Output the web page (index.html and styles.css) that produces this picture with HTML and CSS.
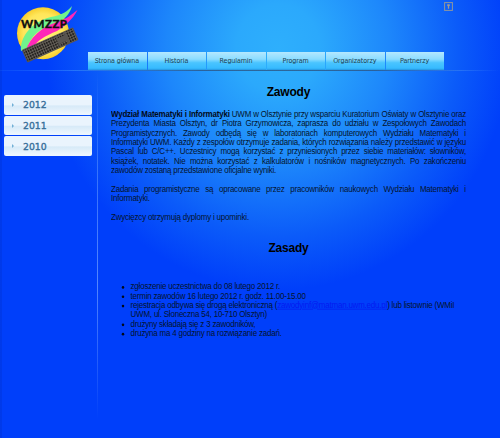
FILE: index.html
```html
<!DOCTYPE html>
<html lang="pl">
<head>
<meta charset="utf-8">
<title>WMZZP</title>
<link rel="stylesheet" href="styles.css">
</head>
<body>
<header class="header">
  <svg class="logo" viewBox="0 0 64 60" width="64" height="60">
    <defs>
      <radialGradient id="sun"><stop offset="0" stop-color="#fff47c"/><stop offset=".75" stop-color="#ffe65a"/><stop offset="1" stop-color="#f8ce2e"/></radialGradient>
      <pattern id="keys" width="2.5" height="2.7" patternUnits="userSpaceOnUse"><rect width="2.5" height="2.7" fill="#6d6860"/><rect width="1.8" height="2" fill="#24211e"/></pattern>
    </defs>
    <circle cx="28" cy="28.2" r="26" fill="url(#sun)"/>
    <path d="M6 46C5 32 16 17 36 12C47 10 53 6 57 1C55 9 49 16 38 19C24 24 16 31 12 43Z" fill="#71f38d"/>
    <path d="M11 45C15 33 26 22 42 17C52 14 57 9 62.500 5C58 14 50 21 42 26C30 31 22 35 18 43Z" fill="#ff27b8"/>
    <text class="logo-text" x="6" y="23.300" textLength="46">WMZZP</text>
    <g transform="translate(6.800 45) rotate(-24)">
      <rect width="56" height="13.800" rx="1" fill="#575450"/>
      <rect x="1" y="1" width="35" height="12" fill="url(#keys)"/>
      <rect x="38" y="1" width="7" height="3" fill="url(#keys)"/>
      <rect x="38" y="9.500" width="7" height="3" fill="url(#keys)"/>
      <rect x="47" y="1" width="8" height="12" fill="url(#keys)"/>
    </g>
  </svg>
  <svg class="up" viewBox="0 0 9 9" width="9" height="9"><rect x=".6" y=".6" width="7.8" height="7.8" fill="none" stroke="#8e969e" stroke-width="1"/><path d="M4.5 2.2V6.8M3 3.2H6" fill="none" stroke="#a79c8d" stroke-width="1.3"/></svg>
  <nav class="nav">
    <a><span>Strona główna</span></a><a><span>Historia</span></a><a><span>Regulamin</span></a><a><span>Program</span></a><a><span>Organizatorzy</span></a><a><span>Partnerzy</span></a>
  </nav>
</header>
<div class="columns">
  <aside class="side">
    <a><i></i>2012</a><a><i></i>2011</a><a><i></i>2010</a>
  </aside>
  <main class="main">
   <div class="content">
    <h2>Zawody</h2>
    <p>
      <span class="l"><b>Wydział Matematyki i Informatyki</b> UWM w Olsztynie przy wsparciu Kuratorium Oświaty w Olsztynie oraz</span>
      <span class="l">Prezydenta Miasta Olsztyn, dr Piotra Grzymowicza, zaprasza do udziału w Zespołowych Zawodach</span>
      <span class="l">Programistycznych. Zawody odbędą się w laboratoriach komputerowych Wydziału Matematyki i</span>
      <span class="l">Informatyki UWM. Każdy z zespołów otrzymuje zadania, których rozwiązania należy przedstawić w języku</span>
      <span class="l">Pascal lub C/C++. Uczestnicy mogą korzystać z przyniesionych przez siebie materiałów: słowników,</span>
      <span class="l">książek, notatek. Nie można korzystać z kalkulatorów i nośników magnetycznych. Po zakończeniu</span>
      <span class="l end">zawodów zostaną przedstawione oficjalne wyniki.</span>
    </p>
    <p>
      <span class="l">Zadania programistyczne są opracowane przez pracowników naukowych Wydziału Matematyki i</span>
      <span class="l end">Informatyki.</span>
    </p>
    <p><span class="l end">Zwycięzcy otrzymują dyplomy i upominki.</span></p>
    <h2 class="rules">Zasady</h2>
    <ul>
      <li>zgłoszenie uczestnictwa do 08 lutego 2012 r.</li>
      <li>termin zawodów 16 lutego 2012 r. godz. 11.00-15.00</li>
      <li>rejestracja odbywa się drogą elektroniczną (<a class="mail">zawodyinf@matman.uwm.edu.pl</a>) lub listownie (WMiI<br>UWM, ul. Słoneczna 54, 10-710 Olsztyn)</li>
      <li>drużyny składają się z 3 zawodników,</li>
      <li>drużyna ma 4 godziny na rozwiązanie zadań.</li>
    </ul>
   </div>
  </main>
</div>
</body>
</html>
```
FILE: styles.css
```css
* { box-sizing: border-box; }
body {
  margin: 0;
  width: 500px;
  height: 438px;
  overflow: hidden;
  font-family: "Liberation Sans", Arial, sans-serif;
  color: #04142e;
  background:
    linear-gradient(90deg, rgba(0,40,180,.22) 2px, transparent 2px),
    radial-gradient(ellipse 232px 242px at 278px 48px, #2eaffc 0%, #2ba9fc 18%, #1d87fb 48%, #0b5bf9 78%, #003ffa 100%);
}
.header {
  height: 72px;
  display: grid;
  grid-template-columns: 88px 356px 56px;
  grid-template-rows: 52px 20px;
  background: linear-gradient(90deg, rgba(70,160,250,.1), rgba(80,170,250,.4) 15%, rgba(45,85,130,.8) 40%, rgba(45,85,130,.8) 75%, rgba(80,150,240,.4) 92%, transparent) 0 70px / 100% 1px no-repeat;
}
.logo { grid-area: 1 / 1 / 3 / 2; margin: 5px 0 0 15px; }
.logo-text { font: 900 11.5px Lato, sans-serif; fill: #111; stroke: #111; stroke-width: .3px; }
.up { display: block; grid-area: 1 / 2 / 2 / 4; margin: 2px 0 0 356px; }
.nav { grid-area: 2 / 2; display: grid; grid-template-columns: repeat(6, 1fr); gap: 1px; height: 18px; }
.nav a {
  display: flex;
  align-items: center;
  justify-content: center;
  white-space: nowrap;
  color: #1c3e50;
  background: linear-gradient(#b4e8ff, #8bdcff 40%, #49c4ff 60%, #37bbff 90%, #2595e0);
}
.nav span { font: 12px/14px "DejaVu Sans", sans-serif; letter-spacing: -.2px; margin: 0 -20px; transform: scale(.53); }
.columns { display: grid; grid-template-columns: 97px 403px; height: 366px; }
.side { padding: 23px 5px 0 4px; display: flex; flex-direction: column; gap: 1px; }
.side a {
  height: 19.7px;
  display: flex;
  align-items: center;
  border-radius: 2px;
  background: linear-gradient(#eaf4fd 48%, #d7eaf8 55%, #edf6fe 95%);
  color: #386f9a;
  font: 9.3px/19px "DejaVu Sans", sans-serif;
  -webkit-text-stroke: .35px #386f9a;
}
.side i { margin: 0 9px 0 8px; border-left: 2px solid #71afd6; border-top: 2px solid transparent; border-bottom: 2px solid transparent; }
.main {
  height: 366px;
  overflow: hidden;
  padding: 12.9px 0 0 14px;
  background: linear-gradient(transparent, rgba(110,165,255,.45) 25%, rgba(120,165,255,.7) 60%, transparent 98%) 0 0 / 1px 354px no-repeat;
}
.content {
  width: 562.5px;
  height: 350px;
  font-size: 12.6px;
  letter-spacing: -.3px;
  line-height: 14px;
  transform: scale(.631, .668);
  transform-origin: 0 0;
}
h2 { margin: 0 0 15px; font-size: 19px; line-height: 22px; text-align: center; color: #000; }
p { margin: 0 0 14px; }
b { color: #020a18; }
.l { display: block; white-space: nowrap; text-align: justify; text-align-last: justify; }
.end { text-align-last: left; }
.rules { margin: 28px 0 40px; }
ul { margin: 0; padding: 0 0 0 31px; white-space: nowrap; }
li::marker { color: #020a18; }
.mail { color: #0419f0; text-decoration: underline; }
```
